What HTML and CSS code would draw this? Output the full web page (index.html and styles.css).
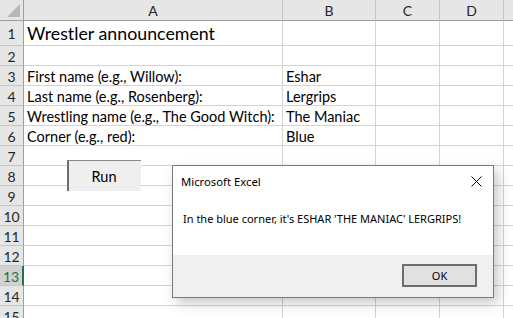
FILE: index.html
```html
<!DOCTYPE html>
<html>
<head>
<meta charset="utf-8">
<link rel="stylesheet" href="styles.css">
</head>
<body>
<div class="sheet">
  <div class="grid">
    <div class="c hdr corner"><span class="tri"></span></div>
    <div class="c hdr col">A</div>
    <div class="c hdr col">B</div>
    <div class="c hdr col">C</div>
    <div class="c hdr col">D</div>
    <div class="c hdr col"></div>

    <div class="c rh r1">1</div>
    <div class="c r1 title">Wrestler announcement</div>
    <div class="c r1"></div><div class="c r1"></div><div class="c r1"></div><div class="c r1"></div>

    <div class="c rh">2</div>
    <div class="c"></div><div class="c"></div><div class="c"></div><div class="c"></div><div class="c"></div>

    <div class="c rh">3</div>
    <div class="c txt">First name (e.g., Willow):</div>
    <div class="c txt">Eshar</div><div class="c"></div><div class="c"></div><div class="c"></div>

    <div class="c rh">4</div>
    <div class="c txt">Last name (e.g., Rosenberg):</div>
    <div class="c txt">Lergrips</div><div class="c"></div><div class="c"></div><div class="c"></div>

    <div class="c rh">5</div>
    <div class="c txt">Wrestling name (e.g., The Good Witch):</div>
    <div class="c txt">The Maniac</div><div class="c"></div><div class="c"></div><div class="c"></div>

    <div class="c rh">6</div>
    <div class="c txt">Corner (e.g., red):</div>
    <div class="c txt">Blue</div><div class="c"></div><div class="c"></div><div class="c"></div>

    <div class="c rh">7</div>
    <div class="c"></div><div class="c"></div><div class="c"></div><div class="c"></div><div class="c"></div>
    <div class="c rh">8</div>
    <div class="c"></div><div class="c"></div><div class="c"></div><div class="c"></div><div class="c"></div>
    <div class="c rh">9</div>
    <div class="c"></div><div class="c"></div><div class="c"></div><div class="c"></div><div class="c"></div>
    <div class="c rh">10</div>
    <div class="c"></div><div class="c"></div><div class="c"></div><div class="c"></div><div class="c"></div>
    <div class="c rh">11</div>
    <div class="c"></div><div class="c"></div><div class="c"></div><div class="c"></div><div class="c"></div>
    <div class="c rh">12</div>
    <div class="c"></div><div class="c"></div><div class="c"></div><div class="c"></div><div class="c"></div>
    <div class="c rh sel">13</div>
    <div class="c"></div><div class="c"></div><div class="c"></div><div class="c"></div><div class="c"></div>
    <div class="c rh">14</div>
    <div class="c"></div><div class="c"></div><div class="c"></div><div class="c"></div><div class="c"></div>
    <div class="c rh">15</div>
    <div class="c"></div><div class="c"></div><div class="c"></div><div class="c"></div><div class="c"></div>
  </div>

  <div class="run-btn">Run</div>

  <div class="dialog">
    <div class="dlg-head">
      <span class="dlg-title">Microsoft Excel</span>
      <svg class="dlg-close" width="11" height="11" viewBox="0 0 11 11"><path d="M0.5 0.5 L10.5 10.5 M10.5 0.5 L0.5 10.5" stroke="#000" stroke-width="1" fill="none"/></svg>
    </div>
    <div class="dlg-body">In the blue corner, it's ESHAR 'THE MANIAC' LERGRIPS!</div>
    <div class="dlg-foot">
      <div class="ok-btn">OK</div>
    </div>
  </div>
</div>
</body>
</html>
```

FILE: styles.css
```css
html, body {
  margin: 0;
  padding: 0;
  background: #ffffff;
}
.sheet {
  position: relative;
  width: 513px;
  height: 318px;
  overflow: hidden;
  font-family: "Lato", "Carlito", sans-serif;
  font-size: 14.5px;
  color: #000;
}
.grid {
  display: grid;
  grid-template-columns: 24px 259px 93px 64px 64px 40px;
  grid-template-rows: 21px 25px repeat(14, 20px);
}
.c {
  box-sizing: border-box;
  border-right: 1px solid #d4d4d4;
  border-bottom: 1px solid #d4d4d4;
  overflow: visible;
  white-space: nowrap;
  display: flex;
  align-items: flex-end;
}
.hdr {
  background: #e6e6e6;
  border-right: 1px solid #c6c6c6;
  border-bottom: 1px solid #9e9e9e;
  justify-content: center;
  align-items: center;
  color: #262626;
  font-size: 14px;
}
.corner {
  position: relative;
  border-right: 1px solid #9e9e9e;
}
.tri {
  position: absolute;
  right: 3px;
  bottom: 3px;
  width: 0;
  height: 0;
  border-left: 13px solid transparent;
  border-bottom: 13px solid #b7b7b7;
}
.rh {
  background: #e6e6e6;
  border-right: 1px solid #9e9e9e;
  border-bottom: 1px solid #c6c6c6;
  justify-content: center;
  align-items: center;
  color: #262626;
  font-size: 14px;
  padding-top: 1px;
}
.rh.sel {
  background: #d2d2d2;
  border-right: 2px solid #217346;
  color: #217346;
}
.txt {
  padding: 0 0 0 3px;
  position: relative;
  z-index: 1;
}
.title {
  font-size: 17.8px;
  padding: 0 0 1px 3px;
}
.run-btn {
  position: absolute;
  left: 67px;
  top: 160px;
  width: 74px;
  height: 31px;
  box-sizing: border-box;
  background: #efefef;
  border-top: 1px solid #8a8a8a;
  border-left: 2px solid #6e6e6e;
  display: flex;
  align-items: center;
  justify-content: center;
  font-size: 14.5px;
  padding-top: 1px;
  padding-right: 2px;
}
.dialog {
  position: absolute;
  left: 172px;
  top: 165px;
  width: 322px;
  height: 133px;
  box-sizing: border-box;
  border: 1px solid #7a7a7a;
  background: #ffffff;
  box-shadow: 4px 5px 12px rgba(0, 0, 0, 0.22);
  display: flex;
  flex-direction: column;
  font-family: "Noto Sans", "Open Sans", sans-serif;
  font-size: 11px;
}
.dlg-head {
  display: flex;
  align-items: center;
  justify-content: space-between;
  height: 30px;
  padding: 0 11px 0 8px;
}
.dlg-title {
  font-size: 11.3px;
  padding-top: 1px;
}
.dlg-body {
  flex: 1;
  padding: 15px 0 0 10px;
}
.dlg-foot {
  height: 42px;
  background: #f0f0f0;
  display: flex;
  justify-content: flex-end;
  align-items: flex-start;
  padding: 9px 16px 0 0;
  box-sizing: border-box;
}
.ok-btn {
  width: 75px;
  height: 23px;
  box-sizing: border-box;
  border: 2px solid #6d6d6d;
  background: #e1e1e1;
  display: flex;
  align-items: center;
  justify-content: center;
}
```
